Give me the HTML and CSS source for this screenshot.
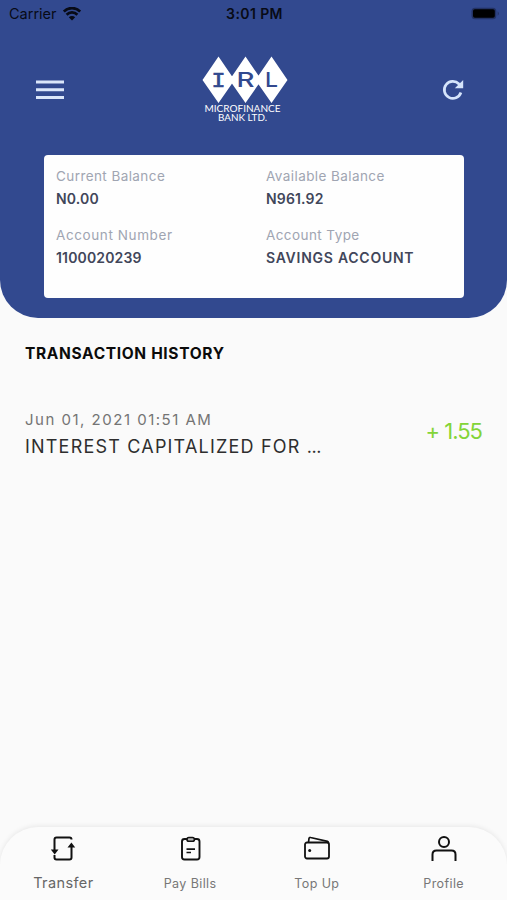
FILE: index.html
```html
<!DOCTYPE html>
<html lang="en">
<head>
    <meta charset="UTF-8">
    <meta name="viewport" content="width=device-width, initial-scale=1.0">
    <title>IRL Microfinance Bank</title>
    <link rel="stylesheet" href="styles.css">
</head>
<body>
    <header class="header">
        <div class="status-bar">
            <div class="carrier">
                <span>Carrier</span>
                <svg width="18" height="14" viewBox="0 0 18 14">
                    <path d="M.8 4.500a11.600 11.600 0 0 1 16.400 0M3.600 7.700a7.600 7.600 0 0 1 10.800 0" fill="none" stroke="#080b16" stroke-width="2.700"/>
                    <path d="M9 13.400 5.800 10.200a4.600 4.600 0 0 1 6.400 0z" fill="#080b16"/>
                </svg>
            </div>
            <span class="time">3:01 PM</span>
            <svg class="battery" width="30" height="14" viewBox="0 0 30 14">
                <rect x="1.500" y=".7" width="24.800" height="11.600" rx="3.500" fill="#233264"/>
                <rect x="3" y="2.200" width="21.800" height="8.600" rx="1.800" fill="#000"/>
                <path d="M27.700 4.200q2.200 2.300 0 4.600z" fill="#233264"/>
            </svg>
        </div>

        <div class="top-bar">
            <button class="icon-btn" aria-label="Menu">
                <svg width="28" height="20" viewBox="0 0 28 20">
                    <path d="M0 2h28M0 9.700h28M0 17.400h28" stroke="#dbe6fa" stroke-width="3"/>
                </svg>
            </button>
            <svg class="logo" width="88" height="70" viewBox="0 0 88 70">
                <path d="M16.500 1.500 32.500 25 16.500 48 .5 25zM43.500 1.500 59.500 25 43.500 48 27.500 25zM69.500 1.500 85.500 25 69.500 48 53.500 25z" fill="#fff"/>
                <text class="logo-letter logo-serif" x="16.500" y="32" textLength="14" lengthAdjust="spacingAndGlyphs">I</text>
                <text class="logo-letter" x="43.500" y="32" textLength="18" lengthAdjust="spacingAndGlyphs">R</text>
                <text class="logo-letter" x="69.500" y="32" textLength="13" lengthAdjust="spacingAndGlyphs">L</text>
                <text class="logo-name" x="40.500" y="57" textLength="76" lengthAdjust="spacingAndGlyphs">MICROFINANCE</text>
                <text class="logo-name" x="40.500" y="66.300" textLength="49" lengthAdjust="spacingAndGlyphs">BANK LTD.</text>
            </svg>
            <button class="icon-btn" aria-label="Refresh">
                <svg width="22" height="22" viewBox="0 0 22 22">
                    <path d="M18.900 13.500A8.500 8.500 0 1 1 17 5l1.500 1.500" fill="none" stroke="#d5e4fb" stroke-width="2.700"/>
                    <path d="M21.200 1v8.200h-8.400z" fill="#d5e4fb"/>
                </svg>
            </button>
        </div>

        <div class="account-card">
            <div class="account-item">
                <p class="label">Current Balance</p>
                <p class="value">N0.00</p>
            </div>
            <div class="account-item">
                <p class="label">Available Balance</p>
                <p class="value">N961.92</p>
            </div>
            <div class="account-item">
                <p class="label account-number">Account Number</p>
                <p class="value">1100020239</p>
            </div>
            <div class="account-item">
                <p class="label">Account Type</p>
                <p class="value account-type">SAVINGS ACCOUNT</p>
            </div>
        </div>
    </header>

    <main class="history">
        <h1>TRANSACTION HISTORY</h1>
        <div class="transaction">
            <div>
                <p class="date">Jun 01, 2021 01:51 AM</p>
                <p class="description">INTEREST CAPITALIZED FOR <span class="dots">...</span></p>
            </div>
            <span class="amount">+ 1.55</span>
        </div>
    </main>

    <nav class="tab-bar">
        <a class="tab active">
            <svg width="28" height="28" viewBox="0 0 28 28">
                <path d="M5.500 16V4.500q0-2 2-2h13q2 0 2 2M5.500 20v2.500q0 2 2 2h13q2 0 2-2V11" fill="none" stroke="#111" stroke-width="2"/>
                <path d="M1.800 14.500h7.700L5.700 19.500zM18.500 12.500 22.400 7.500 26.200 12.500z" fill="#111"/>
            </svg>
            <span>Transfer</span>
        </a>
        <a class="tab">
            <svg width="28" height="28" viewBox="0 0 28 28">
                <rect x="6" y="4" width="17.500" height="20.500" rx="2.500" fill="none" stroke="#111" stroke-width="1.900"/>
                <rect x="11" y="2.500" width="7.400" height="3.800" rx="1.900" fill="#bbb" stroke="#111" stroke-width="1.600"/>
                <path d="M10.500 14.200h8.500M10.500 17.500h4.500" stroke="#111" stroke-width="1.700"/>
            </svg>
            <span>Pay Bills</span>
        </a>
        <a class="tab">
            <svg width="28" height="28" viewBox="0 0 28 28">
                <rect x="2" y="7.500" width="24" height="16" rx="2" fill="none" stroke="#111" stroke-width="1.800"/>
                <path d="M5.500 7.500 6 3.500q.3-1.300 1.500-1l17 3.800q1 .3 1 2.200" fill="none" stroke="#111" stroke-width="1.700"/>
                <circle cx="6.700" cy="15.500" r="1.500" fill="#111"/>
            </svg>
            <span>Top Up</span>
        </a>
        <a class="tab">
            <svg width="28" height="28" viewBox="0 0 28 28">
                <circle cx="14" cy="7" r="5" fill="none" stroke="#111" stroke-width="2"/>
                <path d="M2.500 26v-6.500q0-4 4-4h15q4 0 4 4V26" fill="none" stroke="#111" stroke-width="2"/>
            </svg>
            <span>Profile</span>
        </a>
    </nav>
</body>
</html>
```
FILE: styles.css
```css
* {
    box-sizing: border-box;
}
body {
    font-family: Inter, "Liberation Sans", sans-serif;
    margin: 0;
    height: 100vh;
    display: flex;
    flex-direction: column;
    background-color: #fafafa;
    overflow: hidden;
}
p, h1 {
    margin: 0;
    white-space: nowrap;
}
.header {
    height: 318px;
    flex: none;
    background-color: #32498f;
    border-radius: 0 0 38px 38px;
}
.status-bar {
    height: 27px;
    padding: 0 7px 0 9px;
    display: grid;
    grid-template-columns: 1fr auto 1fr;
    align-items: center;
    color: #080b16;
    font-size: 14.5px;
}
.carrier {
    display: flex;
    align-items: center;
    gap: 6px;
}
.time {
    font-weight: 600;
    font-size: 14px;
    letter-spacing: .4px;
}
.battery {
    justify-self: end;
}
.top-bar {
    height: 128px;
    padding: 0 43px 2px 36px;
    display: grid;
    grid-template-columns: 1fr auto 1fr;
    align-items: center;
}
.icon-btn {
    padding: 0;
    border: none;
    background: none;
    display: flex;
}
.icon-btn:last-child {
    justify-self: end;
}
.logo {
    margin-right: 8px;
}
.logo-letter {
    font-family: Inter, sans-serif;
    font-size: 20px;
    font-weight: 500;
    fill: #32498f;
    text-anchor: middle;
}
.logo-serif {
    font-family: "DejaVu Sans Mono", monospace;
    stroke: #32498f;
    stroke-width: .6px;
}
.logo-name {
    font-family: Lato, sans-serif;
    font-size: 9px;
    fill: #fff;
    text-anchor: middle;
}
.account-card {
    width: 420px;
    height: 143px;
    margin-left: 44px;
    padding: 12px 12px 0;
    display: grid;
    grid-template-columns: 210px 1fr;
    grid-auto-rows: 59px;
    border-radius: 4px;
    background-color: #fefefe;
}
.label {
    font-size: 13.5px;
    line-height: 18px;
    letter-spacing: .42px;
    color: #a0a5b2;
}
.account-number {
    letter-spacing: .6px;
}
.value {
    margin-top: 4px;
    font-size: 14px;
    line-height: 20px;
    letter-spacing: .15px;
    font-weight: 600;
    color: #41465a;
}
.account-type {
    letter-spacing: .75px;
}
.history {
    flex: 1;
    padding: 26px 25px 0;
}
h1 {
    font-size: 15.5px;
    line-height: 19px;
    letter-spacing: .65px;
    font-weight: 700;
    color: #0b0b0b;
}
.transaction {
    margin-top: 46px;
    display: flex;
    justify-content: space-between;
    align-items: center;
}
.date {
    font-size: 15px;
    line-height: 21px;
    letter-spacing: 1.5px;
    color: #747474;
}
.description {
    margin-top: 4px;
    font-size: 18px;
    line-height: 26px;
    letter-spacing: 1.2px;
    color: #2e2e2e;
}
.dots {
    letter-spacing: -.5px;
}
.amount {
    margin-top: -8px;
    font-size: 22px;
    letter-spacing: -1px;
    color: #83d438;
}
.tab-bar {
    height: 73px;
    flex: none;
    padding: 8px 0 0;
    display: grid;
    grid-template-columns: repeat(4, 1fr);
    border-radius: 38px 38px 0 0;
    background-color: #fbfbfb;
    box-shadow: 0 -1px 5px rgba(0, 0, 0, .08);
}
.tab {
    display: flex;
    flex-direction: column;
    align-items: center;
    font-size: 12.5px;
    color: #777;
}
.tab span {
    margin-top: 12px;
    line-height: 17px;
    letter-spacing: .4px;
}
.tab.active {
    font-size: 14.5px;
    color: #666;
}
.tab.active span {
    margin-top: 11px;
}
```
